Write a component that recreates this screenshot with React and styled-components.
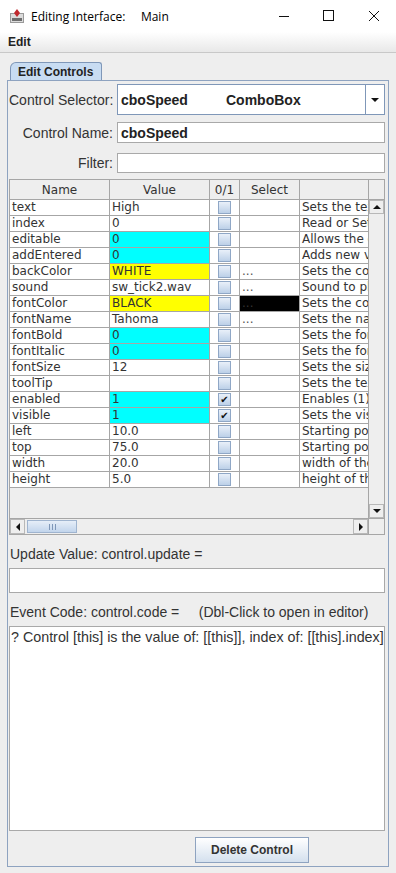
import React from 'react';
import styled, { createGlobalStyle } from 'styled-components';

const GlobalStyle = createGlobalStyle`
  html, body {
    margin: 0;
    padding: 0;
    background: #eeeeee;
  }
  body {
    width: 396px;
    height: 873px;
    overflow: hidden;
    font-family: "Liberation Sans", Arial, sans-serif;
    color: #333333;
  }
`;

const Window = styled.div`
  width: 396px;
  height: 873px;
  display: flex;
  flex-direction: column;
  background: #eeeeee;
`;

const TitleBar = styled.div`
  height: 32px;
  display: flex;
  align-items: center;
  background: #ffffff;
  font-family: "Open Sans", "Liberation Sans", sans-serif;
  font-size: 12px;
  color: #000000;
`;

const TitleIcon = styled.svg`
  margin: 0 6px 0 9px;
`;

const TitleText = styled.span`
  flex: 1;
  white-space: pre;
`;

const WinButton = styled.div`
  width: 45px;
  height: 32px;
  display: flex;
  align-items: center;
  justify-content: center;
`;

const MenuBar = styled.div`
  height: 20px;
  display: flex;
  align-items: center;
  padding-left: 8px;
  background: linear-gradient(#ffffff, #e8e8e8);
  border-bottom: 1px solid #c8c8c8;
  font-size: 12px;
  font-weight: bold;
  color: #222222;
`;

const TabStrip = styled.div`
  height: 18px;
  margin-top: 9px;
  padding-left: 10px;
  display: flex;
  align-items: flex-end;
`;

const Tab = styled.div`
  height: 17px;
  padding: 0 8px 0 7px;
  display: flex;
  align-items: center;
  background: #c8dcf2;
  border: 1px solid #7f97b8;
  border-bottom: none;
  border-radius: 6px 3px 0 0;
  font-size: 12px;
  font-weight: bold;
  color: #222222;
`;

const Panel = styled.div`
  margin: 0 7px;
  border: 1px solid #8ea3c0;
  padding: 3px 3px 3px 1px;
  display: flex;
  flex-direction: column;
`;

const FieldRow = styled.div`
  display: flex;
  align-items: center;
  margin-top: ${(p) => p.$top || 0}px;
`;

const Label = styled.div`
  width: 104px;
  padding-right: 4px;
  text-align: right;
  font-size: 14px;
  color: #333333;
  white-space: nowrap;
`;

const Combo = styled.div`
  flex: 1;
  height: 29px;
  display: flex;
  background: #ffffff;
  border: 1px solid #7f97b8;
`;

const ComboText = styled.div`
  flex: 1;
  display: flex;
  align-items: center;
  padding-left: 3px;
  font-size: 14px;
  font-weight: bold;
  color: #222222;
`;

const ComboName = styled.span`
  width: 105px;
`;

const ComboArrow = styled.div`
  width: 18px;
  border-left: 1px solid #7f97b8;
  display: flex;
  align-items: center;
  justify-content: center;
`;

const TextInput = styled.div`
  flex: 1;
  height: ${(p) => p.$h || 19}px;
  display: flex;
  align-items: center;
  padding-left: 3px;
  background: #ffffff;
  border: 1px solid #a9a9a9;
  font-size: 14px;
  font-weight: bold;
  color: #222222;
`;

const WideInput = styled(TextInput)`
  flex: none;
  margin-top: 6px;
`;

const TableBox = styled.div`
  margin-top: 6px;
  height: 354px;
  border: 1px solid #a6a6a6;
  display: flex;
  flex-direction: column;
`;

const TableMain = styled.div`
  flex: 1;
  display: flex;
  min-height: 0;
`;

const Viewport = styled.div`
  width: 361px;
  overflow: hidden;
  background: #eeeeee;
`;

const Grid = styled.div`
  display: grid;
  grid-template-columns: 100px 100px 30px 60px 72px;
`;

const HeadCell = styled.div`
  height: 19px;
  display: flex;
  align-items: center;
  justify-content: center;
  background: #eeeeee;
  border-right: 1px solid #a6a6a6;
  border-bottom: 1px solid #a6a6a6;
  font-family: "DejaVu Sans", "Liberation Sans", sans-serif;
  font-size: 12px;
  color: #333333;
`;

const Cell = styled.div`
  height: 15px;
  line-height: 15px;
  display: flex;
  align-items: center;
  justify-content: ${(p) => (p.$center ? 'center' : 'flex-start')};
  padding-left: ${(p) => (p.$center ? 0 : 2)}px;
  background: ${(p) => p.$bg || '#ffffff'};
  border-right: 1px solid #a6a6a6;
  border-bottom: 1px solid #a6a6a6;
  font-family: "DejaVu Sans", "Liberation Sans", sans-serif;
  font-size: 12px;
  color: ${(p) => p.$color || '#333333'};
  white-space: nowrap;
  overflow: hidden;
`;

const Check = styled.div`
  width: 11px;
  height: 11px;
  border: 1px solid #8fa7c6;
  background: linear-gradient(#e9f0f9, #bcd0e8);
  display: flex;
  align-items: center;
  justify-content: center;
  font-size: 10px;
  line-height: 1;
  color: #111111;
`;

const VScroll = styled.div`
  width: 15px;
  display: flex;
  flex-direction: column;
  border-left: 1px solid #a6a6a6;
`;

const Corner = styled.div`
  height: 19px;
  background: #eeeeee;
  border-bottom: 1px solid #a6a6a6;
`;

const ScrollTrack = styled.div`
  flex: 1;
  background: #eeeeee;
`;

const ArrowBtn = styled.div`
  width: ${(p) => p.$w || 15}px;
  height: ${(p) => p.$h || 14}px;
  display: flex;
  align-items: center;
  justify-content: center;
  background: #eeeeee;
  border: 1px solid #b8b8b8;
  box-sizing: border-box;
`;

const HScroll = styled.div`
  height: 15px;
  display: flex;
  border-top: 1px solid #a6a6a6;
`;

const HTrack = styled.div`
  flex: 1;
  display: flex;
  align-items: center;
  padding-left: 2px;
  background: #eeeeee;
`;

const Thumb = styled.div`
  width: 50px;
  height: 13px;
  border: 1px solid #9fb4cf;
  box-sizing: border-box;
  background: linear-gradient(#e6eef8, #c2d5ec);
  display: flex;
  align-items: center;
  justify-content: center;
  gap: 2px;
`;

const Grip = styled.span`
  width: 1px;
  height: 6px;
  background: #7f97b8;
`;

const CornerBox = styled.div`
  width: 15px;
  background: #eeeeee;
  border-left: 1px solid #a6a6a6;
`;

const Caption = styled.div`
  margin-top: ${(p) => p.$top}px;
  height: 17px;
  display: flex;
  align-items: center;
  padding-left: 1px;
  font-size: 14px;
  color: #333333;
  white-space: pre;
`;

const Area = styled.div`
  margin-top: 6px;
  height: 199px;
  background: #ffffff;
  border: 1px solid #a9a9a9;
  padding: 2px 1px;
  font-size: 14.3px;
  color: #333333;
  white-space: nowrap;
  overflow: hidden;
`;

const ButtonRow = styled.div`
  display: flex;
  margin-top: 6px;
  padding-left: 186px;
`;

const Button = styled.div`
  width: 112px;
  height: 24px;
  display: flex;
  align-items: center;
  justify-content: center;
  border: 1px solid #8ea3c0;
  background: linear-gradient(#ffffff, #d4e0ee);
  font-size: 12px;
  font-weight: bold;
  color: #333333;
`;

const rows = [
  ['text', 'High', null, false, '', 'Sets the text'],
  ['index', '0', null, false, '', 'Read or Sets'],
  ['editable', '0', '#00ffff', false, '', 'Allows the co'],
  ['addEntered', '0', '#00ffff', false, '', 'Adds new va'],
  ['backColor', 'WHITE', '#ffff00', false, '...', 'Sets the colo'],
  ['sound', 'sw_tick2.wav', null, false, '...', 'Sound to pla'],
  ['fontColor', 'BLACK', '#ffff00', false, 'black', 'Sets the colo'],
  ['fontName', 'Tahoma', null, false, '...', 'Sets the nam'],
  ['fontBold', '0', '#00ffff', false, '', 'Sets the fon'],
  ['fontItalic', '0', '#00ffff', false, '', 'Sets the fon'],
  ['fontSize', '12', null, false, '', 'Sets the size'],
  ['toolTip', '', null, false, '', 'Sets the text'],
  ['enabled', '1', '#00ffff', true, '', 'Enables (1) o'],
  ['visible', '1', '#00ffff', true, '', 'Sets the visib'],
  ['left', '10.0', null, false, '', 'Starting posi'],
  ['top', '75.0', null, false, '', 'Starting posi'],
  ['width', '20.0', null, false, '', 'width of the'],
  ['height', '5.0', null, false, '', 'height of the'],
];

const Tri = ({ dir }) => {
  const pts = {
    up: '0,5 4,1 8,5',
    down: '0,1 4,5 8,1',
    left: '5,0 1,4 5,8',
    right: '1,0 5,4 1,8',
  }[dir];
  const vertical = dir === 'up' || dir === 'down';
  return (
    <svg width={vertical ? 8 : 6} height={vertical ? 6 : 8}>
      <polygon points={pts} fill="#111" />
    </svg>
  );
};

const App = () => (
  <Window>
    <GlobalStyle />
    <TitleBar>
      <TitleIcon width="16" height="16" viewBox="0 0 16 16">
        <rect x="1" y="5" width="14" height="10" fill="#9a9a9a" />
        <rect x="2" y="6" width="12" height="8" fill="#dcdcdc" />
        <rect x="3" y="10" width="10" height="3" fill="#6e6e6e" />
        <path d="M8 1 L11 5 L8 9 L5 5 Z" fill="#c0282d" />
      </TitleIcon>
      <TitleText>Editing Interface:     Main</TitleText>
      <WinButton>
        <svg width="12" height="12"><line x1="1" y1="6.5" x2="11" y2="6.5" stroke="#111" /></svg>
      </WinButton>
      <WinButton>
        <svg width="12" height="12"><rect x="0.5" y="0.5" width="10" height="10" fill="none" stroke="#111" /></svg>
      </WinButton>
      <WinButton>
        <svg width="12" height="12"><path d="M1 1 L11 11 M11 1 L1 11" stroke="#111" /></svg>
      </WinButton>
    </TitleBar>
    <MenuBar>Edit</MenuBar>
    <TabStrip>
      <Tab>Edit Controls</Tab>
    </TabStrip>
    <Panel>
      <FieldRow>
        <Label>Control Selector:</Label>
        <Combo>
          <ComboText>
            <ComboName>cboSpeed</ComboName>
            <span>ComboBox</span>
          </ComboText>
          <ComboArrow>
            <Tri dir="down" />
          </ComboArrow>
        </Combo>
      </FieldRow>
      <FieldRow $top={7}>
        <Label>Control Name:</Label>
        <TextInput>cboSpeed</TextInput>
      </FieldRow>
      <FieldRow $top={10}>
        <Label>Filter:</Label>
        <TextInput $h={18} />
      </FieldRow>
      <TableBox>
        <TableMain>
          <Viewport>
            <Grid>
              <HeadCell>Name</HeadCell>
              <HeadCell>Value</HeadCell>
              <HeadCell>0/1</HeadCell>
              <HeadCell>Select</HeadCell>
              <HeadCell />
              {rows.map(([name, value, bg, checked, sel, desc]) => (
                <React.Fragment key={name}>
                  <Cell>{name}</Cell>
                  <Cell $bg={bg}>{value}</Cell>
                  <Cell $center>
                    <Check>{checked ? '✔' : ''}</Check>
                  </Cell>
                  {sel === 'black' ? (
                    <Cell $bg="#000000" $color="#333333">...</Cell>
                  ) : (
                    <Cell $color="#555555">{sel}</Cell>
                  )}
                  <Cell>{desc}</Cell>
                </React.Fragment>
              ))}
            </Grid>
          </Viewport>
          <VScroll>
            <Corner />
            <ArrowBtn><Tri dir="up" /></ArrowBtn>
            <ScrollTrack />
            <ArrowBtn><Tri dir="down" /></ArrowBtn>
          </VScroll>
        </TableMain>
        <HScroll>
          <ArrowBtn $h={15}><Tri dir="left" /></ArrowBtn>
          <HTrack>
            <Thumb>
              <Grip />
              <Grip />
              <Grip />
            </Thumb>
          </HTrack>
          <ArrowBtn $h={15}><Tri dir="right" /></ArrowBtn>
          <CornerBox />
        </HScroll>
      </TableBox>
      <Caption $top={10}>Update Value: control.update =</Caption>
      <WideInput $h={23} />
      <Caption $top={10}>Event Code: control.code =     (Dbl-Click to open in editor)</Caption>
      <Area>? Control [this] is the value of: [[this]], index of: [[this].index]</Area>
      <ButtonRow>
        <Button>Delete Control</Button>
      </ButtonRow>
    </Panel>
  </Window>
);

export default App;
